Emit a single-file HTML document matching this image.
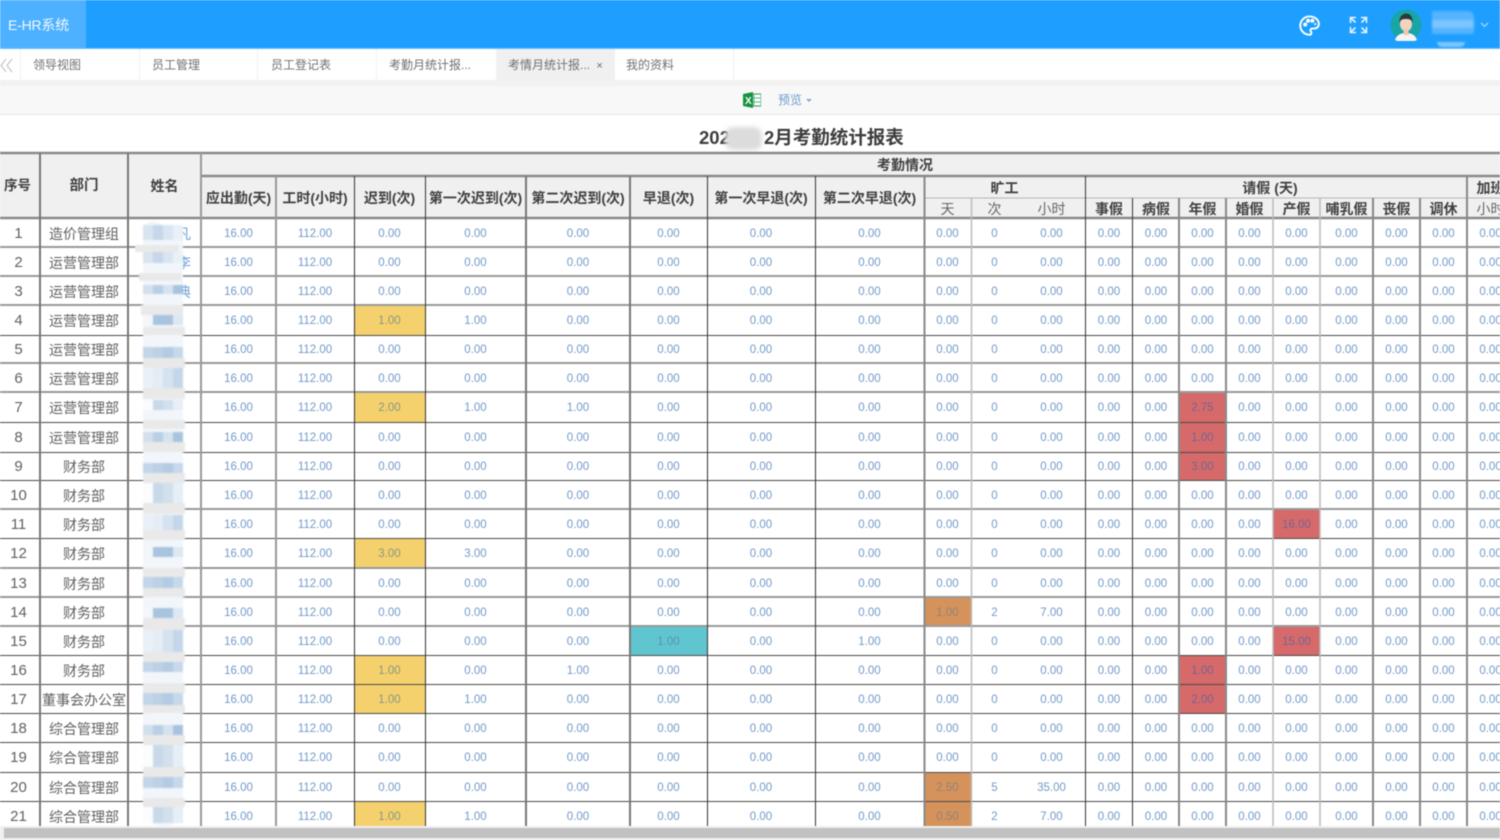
<!DOCTYPE html>
<html lang="zh"><head><meta charset="utf-8"><title>E-HR系统</title>
<style>
*{box-sizing:border-box}
html,body{margin:0;width:1500px;height:840px;overflow:hidden;background:#fff}
body{font-family:"Liberation Sans","Noto Sans CJK SC",sans-serif;position:relative}
#w{position:absolute;left:0;top:0;width:1500px;height:840px;overflow:hidden;filter:blur(.6px)}
.a{position:absolute}
.tab{position:absolute;top:49px;height:31px;line-height:33px;font-size:12px;color:#707070;padding-left:13px;border-right:1px solid #f2f2f2;white-space:nowrap}
#t{position:absolute;left:0;top:153px;width:1514px;table-layout:fixed;border-collapse:separate;border-spacing:0}
#t td,#t th{padding:0;text-align:center;overflow:hidden;white-space:nowrap;line-height:14px}
#t td{padding-top:2px}
#t th{background:#f0f0f0;font-size:14px;font-weight:700;color:#404040;padding-top:1px}
#t th.n{font-weight:400;color:#666}
#t td{font-size:11.5px;color:#7299c8}
#t td.s,#t td.d{font-size:14px;color:#606060}
#t td.s{font-size:15px;padding-right:3px}
#t td.y{background:#f5d16e;color:#8a9680}
#t td.r{background:#d66a6a;color:#76648f}
#t td.o{background:#d6925b;color:#8f8477}
#t td.g{background:#5fc6cf;color:#5d8fb5}
#t td.f{color:#6f9ed6;font-size:14px;text-align:right;padding-right:10px}
</style></head><body><div id="w">
<div class="a" style="left:0;top:0;width:1500px;height:48px;background:#1e9fff"></div>
<div class="a" style="left:0;top:48px;width:1500px;height:1px;background:#6cc0ff"></div>
<div class="a" style="left:0;top:0;width:86px;height:48px;background:#4db1ff;color:#f2f9ff;font-size:14px;line-height:50px;padding-left:8px;letter-spacing:-.2px">E-HR系统</div>
<svg class="a" style="left:1298px;top:14px" width="23" height="23" viewBox="0 0 24 24" fill="none" stroke="#fff" stroke-width="2"><path d="M12 2.5a9.6 9.6 0 1 0 0 19.2c1.4 0 2-1 2-2 0-.6-.3-1-.6-1.4-.3-.4-.5-.8-.5-1.3 0-1 .9-1.8 2-1.8H17a4.8 4.8 0 0 0 4.8-4.8c0-4.400-4.400-7.900-9.800-7.900z"/><circle cx="7.500" cy="11" r="1.100" fill="#fff"/><circle cx="10.500" cy="7" r="1.100" fill="#fff"/><circle cx="15" cy="7" r="1.100" fill="#fff"/><circle cx="18" cy="10.500" r="1.100" fill="#fff" stroke="none"/></svg>
<svg class="a" style="left:1349px;top:16px" width="19" height="18" viewBox="0 0 19 18" fill="none" stroke="#e2f2ff" stroke-width="1.600"><path d="M1.500 7V1.500H7M1.500 1.500l5 5M17.500 7V1.500H12M17.500 1.500l-5 5M1.500 11v5.500H7M1.500 16.500l5-5M17.500 11v5.500H12M17.500 16.500l-5-5"/></svg>
<svg class="a" style="left:1390px;top:9px" width="32" height="32" viewBox="0 0 32 32"><circle cx="16" cy="16" r="15.500" fill="#17a5a5"/><path d="M5 31c2-6 7-7 11-7s9 1 11 7l-5 2H9z" fill="#f4f4f4"/><ellipse cx="16" cy="15" rx="6" ry="7.500" fill="#f3d3bd"/><rect x="13.500" y="20" width="5" height="6" fill="#eec8ae"/><path d="M9.500 14C9 7 13 4.500 16.500 4.500S23 7.500 22.500 14c-1-3-2-4-6.500-4s-5.500 1-6.500 4z" fill="#2c3a40"/></svg>
<div class="a" style="left:1432px;top:11px;width:42px;height:23px;background:linear-gradient(#55b3ff 0 40%,#7cc5ff 40% 75%,#55b3ff 75%);border-radius:0 6px 2px 0;filter:blur(1px)"></div>
<div class="a" style="left:1437px;top:42px;width:28px;height:5px;background:#7cc5ff;border-radius:0 0 10px 10px;filter:blur(.8px)"></div>
<svg class="a" style="left:1480px;top:22px" width="9" height="6" fill="none" stroke="#9ed4ff" stroke-width="1.300"><path d="M1 1l3.500 3.500L8 1"/></svg>

<div class="a" style="left:0;top:49px;width:1500px;height:31px;background:#fff"></div>
<div class="a" style="left:0;top:80px;width:1500px;height:6px;background:#f2f2f2"></div>
<svg class="a" style="left:0;top:58px" width="14" height="15" fill="none" stroke="#c4c4c4" stroke-width="1.200"><path d="M6 1L1 7.500 6 14M12 1L7 7.500 12 14"/></svg>
<div class="a" style="left:20px;top:49px;width:1px;height:31px;background:#f2f2f2"></div>
<div class="tab" style="left:20px;width:120px">领导视图</div>
<div class="tab" style="left:139px;width:119px">员工管理</div>
<div class="tab" style="left:258px;width:119px">员工登记表</div>
<div class="tab" style="left:377px;width:120px;padding-left:12px">考勤月统计报...</div>
<div class="tab" style="left:497px;width:118px;background:#f0f0f0;padding-left:11px">考情月统计报... <span style="color:#666;font-size:11px;margin-left:3px">×</span></div>
<div class="tab" style="left:615px;width:119px;padding-left:11px">我的资料</div>

<div class="a" style="left:0;top:86px;width:1500px;height:28px;background:#f8f8f8"></div>
<div class="a" style="left:0;top:114px;width:1500px;height:1px;background:#e4e4e4"></div>
<svg class="a" style="left:743px;top:92px" width="18" height="16" viewBox="0 0 18 16"><rect x="7" y="2" width="11" height="12" fill="#fff" stroke="#2f9e57"/><path d="M11 2v12M7 6h11M7 10h11" stroke="#5cb67f"/><path d="M0 2l10-2v16L0 14z" fill="#15933f"/><text x="2" y="12" font-size="10" font-weight="700" fill="#fff" font-family="Liberation Sans">X</text></svg>
<div class="a" style="left:778px;top:92px;font-size:12px;line-height:16px;color:#6e9ccb">预览</div>
<div class="a" style="left:806px;top:99px;width:0;height:0;border:3px solid transparent;border-top:3px solid #7fa8d2"></div>

<div class="a" style="left:699px;top:125px;font-size:18.500px;line-height:26px;font-weight:700;color:#3d3d3d">202</div>
<div class="a" style="left:764px;top:125px;font-size:18.500px;line-height:26px;font-weight:700;color:#3d3d3d;white-space:nowrap">2月考勤统计报表</div>
<div class="a" style="left:725px;top:127px;width:37px;height:23px;background:#dcdcdc;border-radius:8px;filter:blur(2px)"></div>

<table id="t">
<colgroup><col style="width:40px"><col style="width:88px"><col style="width:73px"><col style="width:75px"><col style="width:78px"><col style="width:71px"><col style="width:101px"><col style="width:104px"><col style="width:77px"><col style="width:108px"><col style="width:109px"><col style="width:47px"><col style="width:47px"><col style="width:67px"><col style="width:48px"><col style="width:46px"><col style="width:47px"><col style="width:47px"><col style="width:47px"><col style="width:53px"><col style="width:47px"><col style="width:47px"><col style="width:47px"></colgroup>
<tr style="height:23px"><th rowspan="3" style="padding-right:5px;font-size:13.500px">序号<th rowspan="3" style="font-size:14.500px">部门<th rowspan="3">姓名<th colspan="20" style="padding-left:95px">考勤情况</tr>
<tr style="height:22px"><th rowspan="2">应出勤(天)<th rowspan="2">工时(小时)<th rowspan="2">迟到(次)<th rowspan="2">第一次迟到(次)<th rowspan="2">第二次迟到(次)<th rowspan="2">早退(次)<th rowspan="2">第一次早退(次)<th rowspan="2">第二次早退(次)<th colspan="3">旷工<th colspan="8" style="padding-right:12px">请假 (天)<th>加班</tr>
<tr style="height:20px"><th class="n">天<th class="n">次<th class="n">小时<th>事假<th>病假<th>年假<th>婚假<th>产假<th>哺乳假<th>丧假<th>调休<th class="n">小时</tr>
<tr style="height:29px"><td class="s">1<td class="d">造价管理组<td class="f">凡<td>16.00<td>112.00<td>0.00<td>0.00<td>0.00<td>0.00<td>0.00<td>0.00<td>0.00<td>0<td>0.00<td>0.00<td>0.00<td>0.00<td>0.00<td>0.00<td>0.00<td>0.00<td>0.00<td>0.00</tr>
<tr style="height:29px"><td class="s">2<td class="d">运营管理部<td class="f">李<td>16.00<td>112.00<td>0.00<td>0.00<td>0.00<td>0.00<td>0.00<td>0.00<td>0.00<td>0<td>0.00<td>0.00<td>0.00<td>0.00<td>0.00<td>0.00<td>0.00<td>0.00<td>0.00<td>0.00</tr>
<tr style="height:29px"><td class="s">3<td class="d">运营管理部<td class="f">典<td>16.00<td>112.00<td>0.00<td>0.00<td>0.00<td>0.00<td>0.00<td>0.00<td>0.00<td>0<td>0.00<td>0.00<td>0.00<td>0.00<td>0.00<td>0.00<td>0.00<td>0.00<td>0.00<td>0.00</tr>
<tr style="height:30px"><td class="s">4<td class="d">运营管理部<td><td>16.00<td>112.00<td class="y">1.00<td>1.00<td>0.00<td>0.00<td>0.00<td>0.00<td>0.00<td>0<td>0.00<td>0.00<td>0.00<td>0.00<td>0.00<td>0.00<td>0.00<td>0.00<td>0.00<td>0.00</tr>
<tr style="height:28px"><td class="s">5<td class="d">运营管理部<td><td>16.00<td>112.00<td>0.00<td>0.00<td>0.00<td>0.00<td>0.00<td>0.00<td>0.00<td>0<td>0.00<td>0.00<td>0.00<td>0.00<td>0.00<td>0.00<td>0.00<td>0.00<td>0.00<td>0.00</tr>
<tr style="height:29px"><td class="s">6<td class="d">运营管理部<td><td>16.00<td>112.00<td>0.00<td>0.00<td>0.00<td>0.00<td>0.00<td>0.00<td>0.00<td>0<td>0.00<td>0.00<td>0.00<td>0.00<td>0.00<td>0.00<td>0.00<td>0.00<td>0.00<td>0.00</tr>
<tr style="height:30px"><td class="s">7<td class="d">运营管理部<td><td>16.00<td>112.00<td class="y">2.00<td>1.00<td>1.00<td>0.00<td>0.00<td>0.00<td>0.00<td>0<td>0.00<td>0.00<td>0.00<td class="r">2.75<td>0.00<td>0.00<td>0.00<td>0.00<td>0.00<td>0.00</tr>
<tr style="height:30px"><td class="s">8<td class="d">运营管理部<td><td>16.00<td>112.00<td>0.00<td>0.00<td>0.00<td>0.00<td>0.00<td>0.00<td>0.00<td>0<td>0.00<td>0.00<td>0.00<td class="r">1.00<td>0.00<td>0.00<td>0.00<td>0.00<td>0.00<td>0.00</tr>
<tr style="height:28px"><td class="s">9<td class="d">财务部<td><td>16.00<td>112.00<td>0.00<td>0.00<td>0.00<td>0.00<td>0.00<td>0.00<td>0.00<td>0<td>0.00<td>0.00<td>0.00<td class="r">3.00<td>0.00<td>0.00<td>0.00<td>0.00<td>0.00<td>0.00</tr>
<tr style="height:29px"><td class="s">10<td class="d">财务部<td><td>16.00<td>112.00<td>0.00<td>0.00<td>0.00<td>0.00<td>0.00<td>0.00<td>0.00<td>0<td>0.00<td>0.00<td>0.00<td>0.00<td>0.00<td>0.00<td>0.00<td>0.00<td>0.00<td>0.00</tr>
<tr style="height:29px"><td class="s">11<td class="d">财务部<td><td>16.00<td>112.00<td>0.00<td>0.00<td>0.00<td>0.00<td>0.00<td>0.00<td>0.00<td>0<td>0.00<td>0.00<td>0.00<td>0.00<td>0.00<td class="r">16.00<td>0.00<td>0.00<td>0.00<td>0.00</tr>
<tr style="height:30px"><td class="s">12<td class="d">财务部<td><td>16.00<td>112.00<td class="y">3.00<td>3.00<td>0.00<td>0.00<td>0.00<td>0.00<td>0.00<td>0<td>0.00<td>0.00<td>0.00<td>0.00<td>0.00<td>0.00<td>0.00<td>0.00<td>0.00<td>0.00</tr>
<tr style="height:29px"><td class="s">13<td class="d">财务部<td><td>16.00<td>112.00<td>0.00<td>0.00<td>0.00<td>0.00<td>0.00<td>0.00<td>0.00<td>0<td>0.00<td>0.00<td>0.00<td>0.00<td>0.00<td>0.00<td>0.00<td>0.00<td>0.00<td>0.00</tr>
<tr style="height:29px"><td class="s">14<td class="d">财务部<td><td>16.00<td>112.00<td>0.00<td>0.00<td>0.00<td>0.00<td>0.00<td>0.00<td class="o">1.00<td>2<td>7.00<td>0.00<td>0.00<td>0.00<td>0.00<td>0.00<td>0.00<td>0.00<td>0.00<td>0.00</tr>
<tr style="height:29px"><td class="s">15<td class="d">财务部<td><td>16.00<td>112.00<td>0.00<td>0.00<td>0.00<td class="g">1.00<td>0.00<td>1.00<td>0.00<td>0<td>0.00<td>0.00<td>0.00<td>0.00<td>0.00<td class="r">15.00<td>0.00<td>0.00<td>0.00<td>0.00</tr>
<tr style="height:29px"><td class="s">16<td class="d">财务部<td><td>16.00<td>112.00<td class="y">1.00<td>0.00<td>1.00<td>0.00<td>0.00<td>0.00<td>0.00<td>0<td>0.00<td>0.00<td>0.00<td class="r">1.00<td>0.00<td>0.00<td>0.00<td>0.00<td>0.00<td>0.00</tr>
<tr style="height:29px"><td class="s">17<td class="d">董事会办公室<td><td>16.00<td>112.00<td class="y">1.00<td>1.00<td>0.00<td>0.00<td>0.00<td>0.00<td>0.00<td>0<td>0.00<td>0.00<td>0.00<td class="r">2.00<td>0.00<td>0.00<td>0.00<td>0.00<td>0.00<td>0.00</tr>
<tr style="height:29px"><td class="s">18<td class="d">综合管理部<td><td>16.00<td>112.00<td>0.00<td>0.00<td>0.00<td>0.00<td>0.00<td>0.00<td>0.00<td>0<td>0.00<td>0.00<td>0.00<td>0.00<td>0.00<td>0.00<td>0.00<td>0.00<td>0.00<td>0.00</tr>
<tr style="height:30px"><td class="s">19<td class="d">综合管理部<td><td>16.00<td>112.00<td>0.00<td>0.00<td>0.00<td>0.00<td>0.00<td>0.00<td>0.00<td>0<td>0.00<td>0.00<td>0.00<td>0.00<td>0.00<td>0.00<td>0.00<td>0.00<td>0.00<td>0.00</tr>
<tr style="height:29px"><td class="s">20<td class="d">综合管理部<td><td>16.00<td>112.00<td>0.00<td>0.00<td>0.00<td>0.00<td>0.00<td>0.00<td class="o">2.50<td>5<td>35.00<td>0.00<td>0.00<td>0.00<td>0.00<td>0.00<td>0.00<td>0.00<td>0.00<td>0.00</tr>
<tr style="height:29px"><td class="s">21<td class="d">综合管理部<td><td>16.00<td>112.00<td class="y">1.00<td>1.00<td>0.00<td>0.00<td>0.00<td>0.00<td class="o">0.50<td>2<td>7.00<td>0.00<td>0.00<td>0.00<td>0.00<td>0.00<td>0.00<td>0.00<td>0.00<td>0.00</tr>
</table>

<svg class="a" style="left:0;top:0" width="1500" height="840" fill="none">
<g stroke="#8a8a8a" stroke-width="2">
<path d="M0 153H1500M201 176H1500M0 218H1500" stroke-width="2.500"/>
</g>
<path d="M924 198H1500" stroke="#b5b5b5"/>
<g stroke="#999" stroke-width="2"><path d="M0 247H1500M0 276H1500M0 305H1500M0 363H1500M0 392H1500M0 509H1500M0 568H1500M0 597H1500M0 626H1500"/></g>
<g stroke="#4a4a4a" stroke-width="1"><path d="M0 335.500H1500M0 422.500H1500M0 452.500H1500M0 480.500H1500M0 538.500H1500M0 655.500H1500M0 684.500H1500M0 713.500H1500M0 742.500H1500M0 772.500H1500M0 801.500H1500"/></g>
<g stroke="#777" stroke-width="2"><path d="M40 153V826M128 153V826M526 176V826M630 176V826"/></g>
<g stroke="#999" stroke-width="2"><path d="M201 153V826M276 176V826"/></g>
<g stroke="#333" stroke-width="1"><path d="M354.500 176V826M425.500 176V826M707.500 176V826M815.500 176V826M1085.500 176V826M1132.500 198V826"/></g>
<g stroke="#888" stroke-width="2"><path d="M924.500 176V826M1179 198V826M1226 198V826M1373 198V826M1420 198V826M1467 176V826"/></g>
<g stroke="#bbb" stroke-width="1.500"><path d="M971.500 198V826M1273 198V826M1320 198V826"/></g>
</svg>

<svg class="a" style="left:0;top:0;filter:blur(.9px)" width="200" height="840">
<defs>
<linearGradient id="a"><stop offset=".25" stop-color="#d8e4f0"/><stop offset=".25" stop-color="#c5d7e9"/><stop offset=".5" stop-color="#c5d7e9"/><stop offset=".5" stop-color="#d9e5f1"/><stop offset=".75" stop-color="#d9e5f1"/><stop offset=".75" stop-color="#eaf0f7"/></linearGradient>
<linearGradient id="b"><stop offset=".25" stop-color="#f3f6fa"/><stop offset=".25" stop-color="#a9c4df"/><stop offset=".75" stop-color="#a9c4df"/><stop offset=".75" stop-color="#dde8f3"/></linearGradient>
<linearGradient id="c"><stop offset=".25" stop-color="#c3d5e8"/><stop offset=".25" stop-color="#bdd1e6"/><stop offset=".5" stop-color="#bdd1e6"/><stop offset=".5" stop-color="#b3cbe3"/><stop offset=".75" stop-color="#b3cbe3"/><stop offset=".75" stop-color="#c6d8ea"/></linearGradient>
<linearGradient id="d"><stop offset=".25" stop-color="#eaf0f7"/><stop offset=".25" stop-color="#e4ecf4"/><stop offset=".5" stop-color="#e4ecf4"/><stop offset=".5" stop-color="#d5e2f0"/><stop offset=".75" stop-color="#d5e2f0"/><stop offset=".75" stop-color="#c4d6e9"/></linearGradient>
<linearGradient id="f"><stop offset=".25" stop-color="#d2dfec"/><stop offset=".25" stop-color="#b9cfe5"/><stop offset=".5" stop-color="#b9cfe5"/><stop offset=".5" stop-color="#d5e2ef"/><stop offset=".75" stop-color="#d5e2ef"/><stop offset=".75" stop-color="#a8c3df"/></linearGradient>
<linearGradient id="g"><stop offset=".25" stop-color="#fbfcfe"/><stop offset=".25" stop-color="#c8d9ea"/><stop offset=".5" stop-color="#c8d9ea"/><stop offset=".5" stop-color="#d2dfec"/><stop offset=".75" stop-color="#d2dfec"/><stop offset=".75" stop-color="#e6eef6"/></linearGradient>
</defs>
<path d="M143 226q10-10 20 0h20v594q-20 12-40 0z" fill="#f2f6fa"/>
<g fill="#e9e9e9"><rect x="135" y="245" width="44" height="7"/><rect x="139" y="273" width="42" height="8"/><rect x="141" y="305" width="42" height="10"/><rect x="143" y="327" width="42" height="8"/><rect x="143" y="358" width="42" height="10"/><rect x="143" y="388" width="42" height="11"/><rect x="143" y="420" width="42" height="9"/><rect x="143" y="442" width="42" height="10"/><rect x="143" y="473" width="42" height="10"/><rect x="143" y="503" width="42" height="11"/><rect x="143" y="530" width="42" height="10"/><rect x="143" y="568" width="42" height="9"/><rect x="143" y="588" width="42" height="9"/><rect x="143" y="618" width="42" height="12"/><rect x="143" y="652" width="42" height="10"/><rect x="143" y="683" width="42" height="10"/><rect x="143" y="705" width="42" height="8"/><rect x="143" y="735" width="42" height="10"/><rect x="143" y="767" width="42" height="10"/><rect x="143" y="798" width="42" height="9"/></g>
<rect x="143" y="225" width="40" height="15" fill="url(#a)"/>
<rect x="143" y="252" width="40" height="11" fill="url(#a)"/>
<rect x="143" y="285" width="40" height="9" fill="url(#f)"/>
<rect x="143" y="315" width="40" height="10" fill="url(#b)"/>
<rect x="143" y="347" width="40" height="11" fill="url(#c)"/>
<rect x="143" y="368" width="40" height="20" fill="url(#d)"/>
<rect x="143" y="400" width="40" height="10" fill="url(#g)"/>
<rect x="143" y="432" width="40" height="10" fill="url(#f)"/>
<rect x="143" y="463" width="40" height="10" fill="url(#c)"/>
<rect x="143" y="483" width="40" height="20" fill="url(#g)"/>
<rect x="143" y="515" width="40" height="15" fill="url(#d)"/>
<rect x="143" y="547" width="40" height="10" fill="url(#b)"/>
<rect x="143" y="577" width="40" height="11" fill="url(#c)"/>
<rect x="143" y="608" width="40" height="10" fill="url(#b)"/>
<rect x="143" y="630" width="40" height="22" fill="url(#d)"/>
<rect x="143" y="662" width="40" height="10" fill="url(#c)"/>
<rect x="143" y="693" width="40" height="12" fill="url(#c)"/>
<rect x="143" y="725" width="40" height="10" fill="url(#f)"/>
<rect x="143" y="745" width="40" height="22" fill="url(#g)"/>
<rect x="143" y="777" width="40" height="11" fill="url(#c)"/>
<rect x="143" y="807" width="40" height="16" fill="url(#g)"/>
</svg>

<div class="a" style="left:0;top:826px;width:1500px;height:14px;background:#efefef"></div>
<div class="a" style="left:4px;top:828px;width:1496px;height:10px;background:#c1c1c1"></div>
</div></body></html>
